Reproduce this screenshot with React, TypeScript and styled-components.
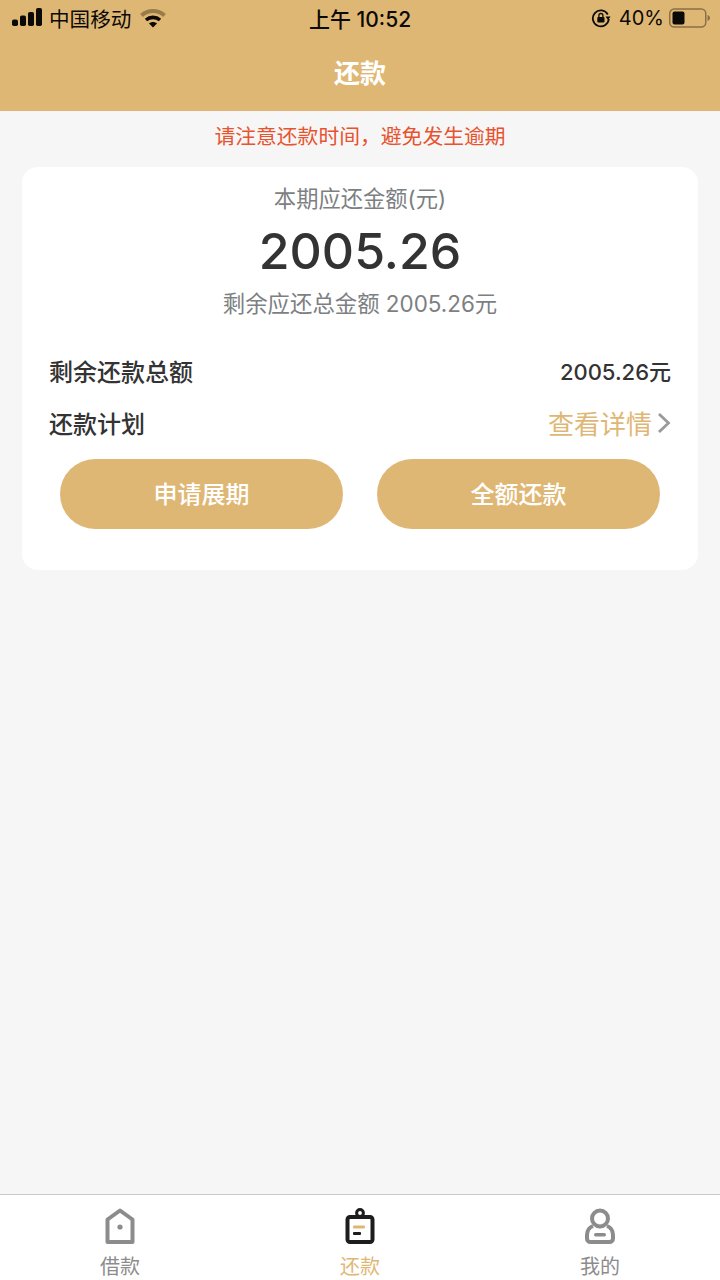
import React from 'react';
import styled, { createGlobalStyle } from 'styled-components';

const FONT = 'Inter, "Noto Sans CJK SC", sans-serif';
const GOLD = '#dfb775';

const GlobalStyle = createGlobalStyle`
  html, body {
    margin: 0;
    padding: 0;
    background: #f6f6f6;
    font-family: ${FONT};
  }
`;

const Page = styled.div`
  width: 720px;
  height: 1280px;
  display: flex;
  flex-direction: column;
  overflow: hidden;
  background: #f6f6f6;
`;

const Header = styled.header`
  height: 111px;
  flex: none;
  background: ${GOLD};
`;

const StatusBar = styled.div`
  height: 36px;
  display: grid;
  grid-template-columns: 1fr auto 1fr;
  align-items: center;
  padding: 0 10px;
  color: #0c0a06;
`;

const StatusLeft = styled.div`
  display: flex;
  align-items: center;
  gap: 8px;
  padding-left: 2px;
  font-size: 20.6px;
`;

const Carrier = styled.span`
  margin-left: -1px;
  margin-right: 1px;
`;

const StatusRight = styled.div`
  display: flex;
  align-items: center;
  justify-content: flex-end;
  gap: 8px;
  font-size: 20px;
`;

const BatteryLevel = styled.span`
  margin-right: -3px;
`;

const Clock = styled.div`
  font-size: 21px;
  font-weight: 500;
`;

const Title = styled.h1`
  margin: 0;
  height: 75px;
  line-height: 75px;
  text-align: center;
  color: #fff;
  font-size: 26px;
  font-weight: 700;
`;

const Notice = styled.div`
  height: 56px;
  flex: none;
  line-height: 52px;
  text-align: center;
  color: #e8532f;
  font-size: 20.8px;
`;

const Card = styled.section`
  margin: 0 22px;
  height: 403px;
  flex: none;
  background: #fff;
  border-radius: 16px;
  display: flex;
  flex-direction: column;
`;

const Caption = styled.div`
  margin-top: 17px;
  height: 30px;
  line-height: 30px;
  text-align: center;
  color: #7d7f83;
  font-size: 22.3px;
`;

const Amount = styled.div`
  margin-top: 7px;
  height: 60px;
  line-height: 60px;
  text-align: center;
  color: #333;
  font-size: 50px;
  font-weight: 500;
`;

const Remaining = styled.div`
  margin-top: 8px;
  height: 30px;
  line-height: 30px;
  text-align: center;
  color: #7d7f83;
  font-size: 22.4px;
`;

const Row = styled.div<{ $top: number }>`
  margin-top: ${(p) => p.$top}px;
  padding: 0 27px;
  height: 34px;
  display: flex;
  align-items: center;
  justify-content: space-between;
  color: #333;
`;

const RowLabel = styled.span`
  font-size: 24px;
  font-weight: 500;
`;

const RowValue = styled.span`
  font-size: 22px;
  font-weight: 500;
`;

const DetailLink = styled.span`
  display: flex;
  align-items: center;
  gap: 5px;
  color: ${GOLD};
  font-size: 26px;
`;

const Actions = styled.div`
  margin-top: 20px;
  padding: 0 38px;
  display: flex;
  justify-content: space-between;
`;

const ActionButton = styled.button`
  width: 283px;
  height: 70px;
  padding: 0 0 4px;
  border: 0;
  border-radius: 35px;
  background: ${GOLD};
  color: #fff;
  font-family: ${FONT};
  font-size: 24px;
  font-weight: 500;
`;

const Spacer = styled.div`
  flex: 1;
`;

const TabBar = styled.nav`
  height: 85px;
  flex: none;
  background: #fff;
  border-top: 1px solid #c9c9c9;
  display: grid;
  grid-template-columns: repeat(3, 1fr);
`;

const Tab = styled.div<{ $active?: boolean }>`
  display: flex;
  flex-direction: column;
  align-items: center;
  padding-top: 13px;
  gap: 11px;
  color: ${(p) => (p.$active ? GOLD : '#8c8c8c')};
  font-size: 20px;
  line-height: 24px;
`;

const SignalIcon = () => (
  <svg width="30" height="20" viewBox="0 1 30 20" fill="#0c0a06">
    <rect x="0" y="12.5" width="6" height="6.5" rx="1.8" />
    <rect x="8" y="8.5" width="6" height="10.5" rx="1.8" />
    <rect x="16" y="5" width="6" height="14" rx="1.8" />
    <rect x="24" y="1" width="6" height="18" rx="1.8" />
  </svg>
);

const WifiIcon = () => (
  <svg width="26" height="20" viewBox="0 0 26 20" fill="none">
    <path d="M1.5 7.5C8 1.5 18 1.5 24.5 7.5" stroke="#9a7c48" strokeWidth="4" />
    <path d="M6 12C10 8.5 16 8.5 20 12" stroke="#0c0a06" strokeWidth="3.6" />
    <path d="M9 15.4L13 19.5L17 15.4C14.6 13.4 11.4 13.4 9 15.4Z" fill="#0c0a06" />
  </svg>
);

const RotationLockIcon = () => (
  <svg width="20" height="20" viewBox="0 0 20 20" fill="none">
    <path d="M16.8 6.5A8 8 0 1 0 17.8 11" stroke="#0c0a06" strokeWidth="1.8" />
    <path d="M14.5 8.6L19.6 8.6L17 12Z" fill="#0c0a06" />
    <rect x="6.3" y="9" width="7.2" height="5.6" rx="1" fill="#0c0a06" />
    <path d="M7.9 9V7.5A2 2 0 0 1 11.9 7.5V9" stroke="#0c0a06" strokeWidth="1.3" />
  </svg>
);

const BatteryIcon = () => (
  <svg width="41" height="20" viewBox="0 0 41 20" fill="none">
    <rect x="0.75" y="1" width="36" height="18" rx="4.5" stroke="#8a7044" strokeWidth="1.5" />
    <rect x="3.5" y="3.5" width="12" height="13" rx="2" fill="#0c0a06" />
    <path d="M38.5 7C40 7.5 41 8.7 41 10C41 11.3 40 12.5 38.5 13Z" fill="#8a7044" />
  </svg>
);

const ChevronIcon = () => (
  <svg width="14" height="22" viewBox="0 -1 14 22" fill="none">
    <path d="M2 2L11.5 11L2 20" stroke="#9a9a9a" strokeWidth="2.8" />
  </svg>
);

const HomeTabIcon = () => (
  <svg width="32" height="36" viewBox="0 0 32 36" fill="none">
    <path d="M3.5 11.5L16 2.5L28.5 11.5V34H3.5Z" stroke="#8c8c8c" strokeWidth="4" strokeLinejoin="round" />
    <circle cx="16" cy="19" r="2.6" fill="#8c8c8c" />
  </svg>
);

const RepayTabIcon = () => (
  <svg width="32" height="36" viewBox="0 0 32 36" fill="none">
    <path d="M6 9H26A2.5 2.5 0 0 1 28.5 11.5V31.5A2.5 2.5 0 0 1 26 34H6A2.5 2.5 0 0 1 3.5 31.5V11.5A2.5 2.5 0 0 1 6 9Z" stroke="#1d1d1d" strokeWidth="4" />
    <circle cx="16" cy="5" r="3.4" stroke="#1d1d1d" strokeWidth="3" />
    <rect x="9" y="17.5" width="12" height="3" rx="1" fill={GOLD} />
    <rect x="9" y="24" width="8" height="3" rx="1" fill="#1d1d1d" />
  </svg>
);

const UserTabIcon = () => (
  <svg width="32" height="36" viewBox="0 0 32 36" fill="none">
    <circle cx="16" cy="10.5" r="8" stroke="#8c8c8c" strokeWidth="4" />
    <path d="M9 18C5 19.5 3 23 3 27V30.5A3.5 3.5 0 0 0 6.5 34H25.5A3.5 3.5 0 0 0 29 30.5V27C29 23 27 19.5 23 18" stroke="#8c8c8c" strokeWidth="4" />
    <rect x="10" y="25" width="12" height="3.4" rx="1.7" fill="#8c8c8c" />
  </svg>
);

const App: React.FC = () => (
  <Page>
    <GlobalStyle />
    <Header>
      <StatusBar>
        <StatusLeft>
          <SignalIcon />
          <Carrier>中国移动</Carrier>
          <WifiIcon />
        </StatusLeft>
        <Clock>上午 10:52</Clock>
        <StatusRight>
          <RotationLockIcon />
          <BatteryLevel>40%</BatteryLevel>
          <BatteryIcon />
        </StatusRight>
      </StatusBar>
      <Title>还款</Title>
    </Header>
    <Notice>请注意还款时间，避免发生逾期</Notice>
    <Card>
      <Caption>本期应还金额(元)</Caption>
      <Amount>2005.26</Amount>
      <Remaining>剩余应还总金额 2005.26元</Remaining>
      <Row $top={34}>
        <RowLabel>剩余还款总额</RowLabel>
        <RowValue>2005.26元</RowValue>
      </Row>
      <Row $top={18}>
        <RowLabel>还款计划</RowLabel>
        <DetailLink>
          查看详情
          <ChevronIcon />
        </DetailLink>
      </Row>
      <Actions>
        <ActionButton>申请展期</ActionButton>
        <ActionButton>全额还款</ActionButton>
      </Actions>
    </Card>
    <Spacer />
    <TabBar>
      <Tab>
        <HomeTabIcon />
        借款
      </Tab>
      <Tab $active>
        <RepayTabIcon />
        还款
      </Tab>
      <Tab>
        <UserTabIcon />
        我的
      </Tab>
    </TabBar>
  </Page>
);

export default App;
